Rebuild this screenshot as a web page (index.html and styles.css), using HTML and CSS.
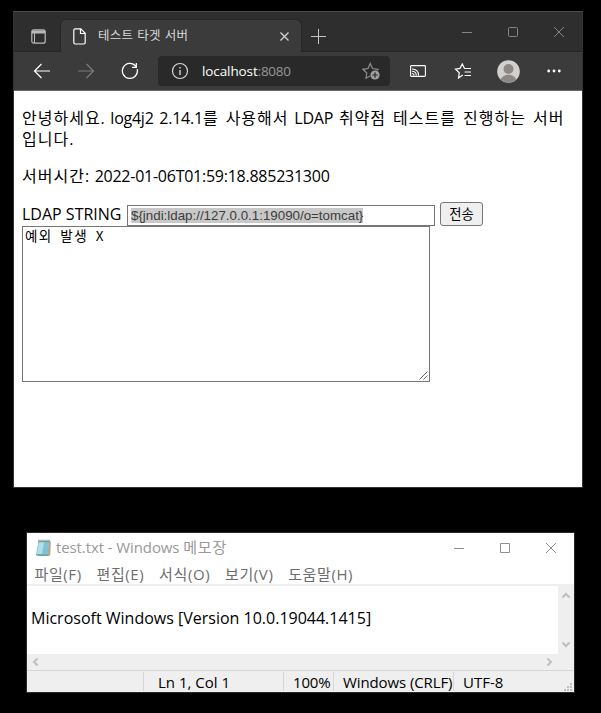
FILE: index.html
```html
<!DOCTYPE html>
<html lang="ko">
<head>
<meta charset="utf-8">
<title>테스트 타겟 서버</title>
<link rel="stylesheet" href="styles.css">
</head>
<body>
<section class="browser">
  <header class="tabstrip">
    <svg class="tab-actions" width="15" height="15" viewBox="0 0 15 15"><rect x=".8" y=".8" width="13.4" height="13.4" rx="2" fill="none" stroke="#b9b9b9" stroke-width="1.2"/><path d="M1 1.5h13v3H1z" fill="#b9b9b9"/><path d="M3.500 4v10" stroke="#b9b9b9"/></svg>
    <div class="tab">
      <svg width="13" height="17" viewBox="0 0 13 17" fill="none" stroke="#fff" stroke-width="1.2"><path d="M2.2.8h5.6l4.4 4.5v9.3c0 .9-.5 1.4-1.4 1.4H2.2c-.9 0-1.4-.5-1.4-1.4V2.200C.8 1.300 1.300.8 2.200.8zM7.500 1v4.500h4.500"/></svg>
      <span class="tab-title">테스트 타겟 서버</span>
      <svg class="tab-close" width="9" height="9" viewBox="0 0 9 9" stroke="#d4d4d4" stroke-width="1.300"><path d="M.5.5l8 8M8.500.5l-8 8"/></svg>
    </div>
    <svg class="new-tab" width="15" height="15" viewBox="0 0 15 15" stroke="#c4c4c4"><path d="M7.500 0v15M0 7.500h15"/></svg>
    <div class="controls">
      <svg width="12" height="12" viewBox="0 0 12 12" stroke="#858585"><path d="M1 6.500h10"/></svg>
      <svg width="12" height="12" viewBox="0 0 12 12" fill="none" stroke="#858585"><rect x="1.500" y="1.500" width="9" height="9" rx="1"/></svg>
      <svg width="12" height="12" viewBox="0 0 12 12" stroke="#858585"><path d="M1 1l10 10M11 1L1 11"/></svg>
    </div>
  </header>
  <nav class="toolbar">
    <svg class="back" width="18" height="16" viewBox="0 0 18 16" fill="none" stroke="#fff" stroke-width="1.200"><path d="M8.500 1L1.500 8l7 7M1.500 8H17"/></svg>
    <svg class="forward" width="18" height="16" viewBox="0 0 18 16" fill="none" stroke="#7c7c7c" stroke-width="1.200"><path d="M9.500 1l7 7-7 7M16.500 8H1"/></svg>
    <svg class="reload" width="18" height="18" viewBox="0 0 18 18" fill="none" stroke="#fff" stroke-width="1.300"><path d="M16.200 7.200A7.500 7.500 0 1 1 14.800 4.300M15.300 1v4.300H11"/></svg>
    <div class="address">
      <svg class="info" width="18" height="18" viewBox="0 0 18 18" fill="none" stroke="#d8d8d8" stroke-width="1.200"><circle cx="9" cy="9" r="7.500"/><path d="M9 8v5M9 5v1.500" stroke-width="1.400"/></svg>
      <span class="url">localhost<span class="port">:8080</span></span>
      <svg class="fav-add" width="18" height="18" viewBox="0 0 18 18" fill="none" stroke="#8e8e8e" stroke-width="1.200"><path d="M8 14l-4 2.200.8-5.200L1 7.300l5-.8L8.200 1.500l2.300 5 5.500.8-1 1"/><circle cx="13" cy="13" r="4.600" fill="#a0a0a0" stroke="none"/><path d="M13 10.300v5.400M10.300 13h5.400" stroke="#292929"/></svg>
    </div>
    <svg class="cast" width="16" height="12" viewBox="0 0 16 12" fill="none" stroke="#fff" stroke-width="1.100"><rect x=".6" y=".6" width="14.800" height="10.800" rx=".8"/><path d="M2 4a6 6 0 0 1 6.500 6.500M2 6.200a4 4 0 0 1 4.300 4.300M2 8.500a2 2 0 0 1 2 2"/></svg>
    <svg class="favorites" width="18" height="16" viewBox="0 0 18 16" fill="none" stroke="#fff" stroke-width="1.200"><path d="M8.800 12L4.500 15l.8-5.200L1.500 6.200l4.500-.8L8.300 1l2.200 4.500h6.500M10.500 9h6.500M10.500 12.500h6.500"/></svg>
    <svg class="avatar" width="23" height="23" viewBox="0 0 23 23"><circle cx="11.500" cy="11.500" r="11.300" fill="#d2d0ce"/><circle cx="11.500" cy="9" r="5" fill="#8c8984"/><path d="M3.800 19.500c2-6.500 13.400-6.500 15.400 0a11 11 0 0 1-15.400 0z" fill="#8c8984"/></svg>
    <svg class="more" width="14" height="4" viewBox="0 0 14 4" fill="#fff"><circle cx="1.700" cy="2" r="1.400"/><circle cx="7" cy="2" r="1.400"/><circle cx="12.300" cy="2" r="1.400"/></svg>
  </nav>
  <main class="page">
    <p class="hello"><span class="ko">안녕하세요</span>. log4j2 2.14.1<span class="ko">를 사용해서</span> LDAP <span class="ko">취약점 테스트를 진행하는 서버<br>입니다</span>.</p>
    <p class="time"><span class="ko">서버시간</span>: <span class="stamp">2022-01-06T01:59:18.885231300</span></p>
    <form class="form">
      <label class="label">LDAP STRING</label>
      <div class="field"><span class="selected">${jndi:ldap://127.0.0.1:19090/o=tomcat}</span></div>
      <button class="send" type="button">전송</button>
    </form>
    <div class="result"><span>예외 발생 X</span>
      <svg class="grip" width="9" height="9" viewBox="0 0 9 9" stroke="#555"><path d="M.5 8.500l8-8M4.500 8.500l4-4" stroke-width=".9"/></svg>
    </div>
  </main>
</section>
<section class="notepad">
  <header class="np-title">
    <svg width="17" height="18" viewBox="0 0 17 18"><path d="M4.500 2.500h11.300l-.5 13-1 1.500H3z" fill="#b3a684"/><path d="M3.500 2h11l-1.500 14H1z" fill="#80c4d4"/><path d="M4 3h5L7 15H2z" fill="#b1dfe9"/><path d="M3.500 2h11" stroke="#66757a" stroke-width="2.500" stroke-dasharray="1 1"/><path d="M1 16h12" stroke="#5298ac"/></svg>
    <span class="np-name">test.txt - Windows <span class="ko">메모장</span></span>
    <div class="controls np-controls">
      <svg width="12" height="12" viewBox="0 0 12 12" stroke="#8e8e8e"><path d="M1 6.500h10"/></svg>
      <svg width="12" height="12" viewBox="0 0 12 12" fill="none" stroke="#8e8e8e"><path d="M1.500 1.500h9v9h-9z"/></svg>
      <svg width="12" height="12" viewBox="0 0 12 12" stroke="#8e8e8e"><path d="M1 1l10 10M11 1L1 11"/></svg>
    </div>
  </header>
  <nav class="np-menu"><span>파일(F)</span><span>편집(E)</span><span>서식(O)</span><span>보기(V)</span><span>도움말(H)</span></nav>
  <div class="np-body">
    <div class="np-text">Microsoft Windows [Version 10.0.19044.1415]</div>
    <div class="vscroll">
      <svg width="8" height="7" viewBox="0 0 8 7" fill="none" stroke="#bfbfbf" stroke-width="2"><path d="M.5 5.500L4 2l3.500 3.500"/></svg>
      <svg width="8" height="7" viewBox="0 0 8 7" fill="none" stroke="#bfbfbf" stroke-width="2"><path d="M.5 1.500L4 5l3.500-3.500"/></svg>
    </div>
  </div>
  <div class="hscroll">
    <svg width="7" height="8" viewBox="0 0 7 8" fill="none" stroke="#bfbfbf" stroke-width="2"><path d="M5.500.5L2 4l3.500 3.500"/></svg>
    <svg width="7" height="8" viewBox="0 0 7 8" fill="none" stroke="#bfbfbf" stroke-width="2"><path d="M1.500.5L5 4 1.500 7.500"/></svg>
  </div>
  <footer class="status">
    <span class="cell"></span><span class="cell pos">Ln 1, Col 1</span><span class="cell zoom">100%</span><span class="cell eol">Windows (CRLF)</span><span class="cell enc">UTF-8</span>
    <svg width="8" height="8" viewBox="0 0 8 8" fill="#bfbfbf"><path d="M6 0h2v2H6zM3 3h2v2H3zM6 3h2v2H6zM0 6h2v2H0zM3 6h2v2H3zM6 6h2v2H6z"/></svg>
  </footer>
</section>
</body>
</html>
```
FILE: styles.css
```css
* { box-sizing: border-box; }
body {
  margin: 0;
  height: 713px;
  padding: 11px 0 0 13px;
  background: #000;
  font-family: "Open Sans", "Noto Sans CJK KR", sans-serif;
  font-size: 15px;
  color: #000;
  overflow: hidden;
  white-space: nowrap;
}
svg { display: block; flex: none; }

.browser { width: 570px; height: 477px; border: 1px solid #333; border-top-color: #4a4a4a; background: #fff; }
.tabstrip { display: flex; height: 40px; background: #2e2e2e; box-shadow: inset 0 -1px #262626; padding-left: 17px; }
.tab-actions { margin-top: 17px; }
.tab { display: flex; align-items: center; width: 240px; height: 32px; margin: 8px 0 0 15px; padding: 0 12px; background: #3b3b3b; border-radius: 5px 5px 0 0; box-shadow: 0 0 2px #1c1c1c; clip-path: inset(-2px -2px 0 -2px); }
.tab-title { margin: -3px 0 0 12px; font-size: 12.5px; letter-spacing: 0.25px; word-spacing: 0.5px; color: #d8d8d8; }
.tab-close { margin-left: auto; }
.new-tab { margin: 17px 0 0 10px; }
.controls { display: flex; gap: 34px; margin: 14px 17px 0 auto; }
.toolbar { display: flex; align-items: center; height: 39px; padding-left: 19px; background: #3b3b3b; border-bottom: 1px solid #6c6868; }
.forward { margin-left: 26px; }
.reload { margin-left: 26px; }
.address { display: flex; align-items: center; width: 232px; height: 30px; margin-left: 19px; padding: 0 10px 0 13px; border-radius: 4px; background: #292929; }
.url { margin-left: 13px; font-size: 13.5px; letter-spacing: -0.1px; color: #fff; }
.port { color: #969696; letter-spacing: -0.3px; }
.fav-add { margin-left: auto; }
.cast { margin-left: 20px; }
.favorites { margin-left: 28px; }
.avatar { margin-left: 25px; }
.more { margin-left: 27px; }

.page { padding: 17px 8px 0; font-size: 16px; }
.page p { margin: 0 0 16px; line-height: 21px; word-spacing: 1.9px; letter-spacing: -0.25px; }
.page .time { margin-bottom: 15px; }
.page .ko { letter-spacing: 1px; }
.ko { letter-spacing: 0.8px; }
.form { display: flex; height: 24px; }
.label { width: 105px; line-height: 25px; }
.field { width: 308px; height: 21px; margin-top: 3px; padding: 2px 3px; border: 1px solid #767676; font: 13.333px/15px "Liberation Sans", sans-serif; }
.selected { display: inline-block; background: #c8c8c8; color: #3c3c3c; }
.send { width: 43px; height: 24px; margin-left: 5px; padding: 0; border: 1px solid #767676; border-radius: 3px; background: #efefef; font: 13.333px/20px "Noto Sans CJK KR", sans-serif; color: #000; }
.result { position: relative; width: 408px; height: 156px; padding: 1px 2px; border: 1px solid #767676; font: 13.5px/15px "Noto Sans CJK KR", sans-serif; letter-spacing: 1.4px; word-spacing: 2.5px; }
.grip { position: absolute; right: 1px; bottom: 1px; }

.notepad { width: 549px; height: 161px; margin: 44px 0 0 13px; border: 1px solid #2a2a2a; background: #fff; }
.np-title { display: flex; align-items: center; height: 29px; padding-left: 8px; color: #999; }
.np-name { margin: -2px 0 0 4px; letter-spacing: -0.1px; }
.np-controls { margin: 0 17px 0 auto; }
.np-menu { display: flex; gap: 14.8px; height: 24px; padding-left: 7.5px; border-bottom: 2px solid #efefef; color: #6d6d6d; letter-spacing: 0.6px; line-height: 24px; }
.np-body { display: flex; height: 68px; }
.np-text { flex: 1; padding: 21px 0 0 4px; font-size: 16px; line-height: 23px; }
.vscroll { display: flex; flex-direction: column; justify-content: space-between; align-items: center; width: 16px; padding: 6px 0; background: #efefef; }
.hscroll { display: flex; justify-content: space-between; align-items: center; height: 16px; padding: 0 21px 0 5px; background: #efefef; }
.status { display: flex; height: 22px; padding-top: 1px; border-top: 1px solid #d7d7d7; background: #efefef; line-height: 21px; }
.cell { width: 117px; height: 19px; border-right: 1px solid #d7d7d7; }
.pos { width: 140px; padding-left: 14px; }
.zoom { width: 50px; padding-left: 9px; letter-spacing: -0.2px; }
.eol { width: 120px; padding-left: 9px; letter-spacing: -0.1px; }
.enc { flex: 1; padding-left: 9px; border: 0; }
.status svg { margin: 11px 2px 0 0; }
```
